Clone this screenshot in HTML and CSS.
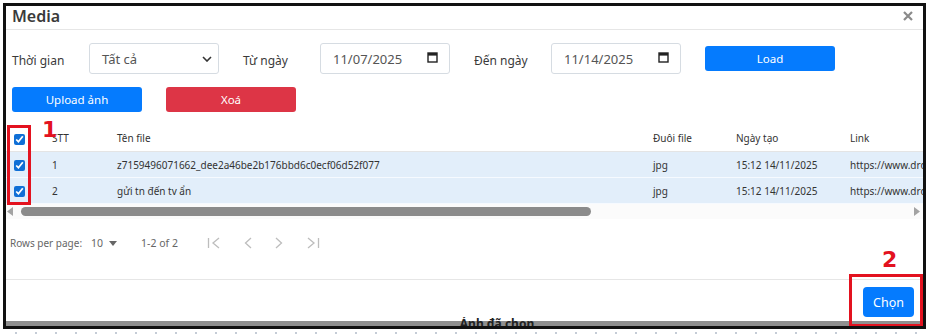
FILE: index.html
```html
<!DOCTYPE html>
<html lang="vi">
<head>
    <meta charset="UTF-8">
    <meta name="viewport" content="width=device-width, initial-scale=1.0">
    <title>Media</title>
    <link rel="stylesheet" href="styles.css">
</head>
<body>
    <div class="frame">
        <div class="modal-header">
            <h3>Media</h3>
            <button class="close-btn" aria-label="close">
                <svg width="10" height="10" viewBox="0 0 10 10"><path d="M1 1L9 9M9 1L1 9" stroke="#8a8a8a" stroke-width="2.2"/></svg>
            </button>
        </div>

        <div class="filter-row">
            <label class="field-label">Thời gian</label>
            <div class="control select-box">
                <span>Tất cả</span>
                <svg width="10" height="6" viewBox="0 0 10 6"><path d="M1 1L5 5L9 1" fill="none" stroke="#333" stroke-width="1.6"/></svg>
            </div>
            <label class="field-label gap">Từ ngày</label>
            <div class="control date-box">
                <span>11/07/2025</span>
                <svg width="11" height="11" viewBox="0 0 11 11"><rect x="1" y="1" width="9" height="9" fill="none" stroke="#222" stroke-width="1.4"/><rect x="1" y="1" width="9" height="2.6" fill="#222"/></svg>
            </div>
            <label class="field-label gap">Đến ngày</label>
            <div class="control date-box">
                <span>11/14/2025</span>
                <svg width="11" height="11" viewBox="0 0 11 11"><rect x="1" y="1" width="9" height="9" fill="none" stroke="#222" stroke-width="1.4"/><rect x="1" y="1" width="9" height="2.6" fill="#222"/></svg>
            </div>
            <button class="btn btn-blue btn-load">Load</button>
        </div>

        <div class="action-row">
            <button class="btn btn-blue">Upload ảnh</button>
            <button class="btn btn-red">Xoá</button>
        </div>

        <div class="table-wrap">
            <table class="media-table">
                <colgroup>
                    <col style="width:38px">
                    <col style="width:65px">
                    <col style="width:536px">
                    <col style="width:83px">
                    <col style="width:114px">
                    <col style="width:594px">
                </colgroup>
                <thead>
                    <tr>
                        <th><input type="checkbox" checked></th>
                        <th>STT</th>
                        <th>Tên file</th>
                        <th>Đuôi file</th>
                        <th>Ngày tạo</th>
                        <th>Link</th>
                    </tr>
                </thead>
                <tbody>
                    <tr>
                        <td><input type="checkbox" checked></td>
                        <td>1</td>
                        <td>z7159496071662_dee2a46be2b176bbd6c0ecf06d52f077</td>
                        <td>jpg</td>
                        <td>15:12 14/11/2025</td>
                        <td>https://www.drop.com/media/z7159496071662_dee2a46be2b176bbd6c0ecf06d52f077.jpg</td>
                    </tr>
                    <tr>
                        <td><input type="checkbox" checked></td>
                        <td>2</td>
                        <td>gửi tn đến tv ẩn</td>
                        <td>jpg</td>
                        <td>15:12 14/11/2025</td>
                        <td>https://www.drop.com/media/gui-tn-den-tv-an.jpg</td>
                    </tr>
                </tbody>
            </table>
        </div>
        <div class="hscroll">
            <svg width="6" height="9" viewBox="0 0 6 9"><path d="M6 0L0 4.5L6 9Z" fill="#a3a3a3"/></svg>
            <div class="hscroll-track"><div class="hscroll-thumb"></div></div>
            <svg width="6" height="9" viewBox="0 0 6 9"><path d="M0 0L6 4.5L0 9Z" fill="#a3a3a3"/></svg>
        </div>

        <div class="pagination">
            <span>Rows per page:</span>
            <span class="rows-select">10 <svg width="8" height="5" viewBox="0 0 8 5"><path d="M0 0H8L4 5Z" fill="#666"/></svg></span>
            <span class="range">1-2 of 2</span>
            <div class="pager">
                <svg width="14" height="12" viewBox="0 0 14 12"><path d="M1.5 1V11M12 1L6 6L12 11" fill="none" stroke="#bdbdbd" stroke-width="1.3"/></svg>
                <svg width="8" height="12" viewBox="0 0 8 12"><path d="M7 1L1.5 6L7 11" fill="none" stroke="#bdbdbd" stroke-width="1.3"/></svg>
                <svg width="8" height="12" viewBox="0 0 8 12"><path d="M1 1L6.5 6L1 11" fill="none" stroke="#bdbdbd" stroke-width="1.3"/></svg>
                <svg width="14" height="12" viewBox="0 0 14 12"><path d="M2 1L8 6L2 11M12.5 1V11" fill="none" stroke="#bdbdbd" stroke-width="1.3"/></svg>
            </div>
        </div>

        <div class="modal-footer">
            <button class="btn btn-blue btn-choose">Chọn</button>
        </div>
        <div class="behind-strip"><span>Ảnh đã chọn</span></div>

        <!-- annotations -->
        <div class="mark mark-1"></div>
        <span class="mark-num num-1">1</span>
        <div class="mark mark-2"></div>
        <span class="mark-num num-2">2</span>
    </div>
    <div class="dots"></div>
</body>
</html>
```

FILE: styles.css
```css
body {
    margin: 0;
    background: #ffffff;
    font-family: 'Noto Sans', 'Open Sans', sans-serif;
    color: #333;
}

.frame {
    position: relative;
    width: 917px;
    height: 320px;
    margin: 3px 0 0 3px;
    border: 3px solid #111;
    overflow: hidden;
    background: #fff;
    display: flex;
    flex-direction: column;
}

/* header */
.modal-header {
    height: 23px;
    border-bottom: 1px solid #e6e6e6;
    display: flex;
    align-items: center;
    justify-content: space-between;
    padding: 0 10px 0 6px;
    flex-shrink: 0;
}

.modal-header h3 {
    margin: -3px 0 0 0;
    font-size: 16px;
    font-weight: 600;
    color: #3a3a3a;
    line-height: 20px;
}

.close-btn {
    border: none;
    background: none;
    padding: 0;
    display: flex;
    margin-top: -4px;
}

/* filters */
.filter-row {
    display: flex;
    align-items: center;
    height: 31px;
    margin-top: 13px;
    padding-left: 6px;
    flex-shrink: 0;
}

.field-label {
    width: 77px;
    font-size: 12px;
    color: #3a3a3a;
    padding-top: 3px;
}

.field-label.gap {
    margin-left: 24px;
}

.control {
    width: 130px;
    height: 31px;
    box-sizing: border-box;
    border: 1px solid #d6dce2;
    border-radius: 3px;
    display: flex;
    align-items: center;
    justify-content: space-between;
    padding: 0 9px 0 12px;
    font-size: 13px;
    color: #555;
}

.select-box {
    padding-right: 6px;
}

.date-box svg {
    margin-right: 2px;
    margin-top: -2px;
}

.btn {
    border: none;
    border-radius: 3px;
    width: 130px;
    height: 25px;
    color: #fff;
    font-family: inherit;
    font-size: 11.5px;
    padding: 0;
}

.btn-blue {
    background-color: #057bfe;
}

.btn-red {
    background-color: #dd3546;
}

.btn-load {
    margin-left: 24px;
}

.action-row {
    display: flex;
    gap: 24px;
    margin-top: 13px;
    padding-left: 6px;
    flex-shrink: 0;
}

/* table */
.table-wrap {
    margin-top: 13px;
    overflow: hidden;
    flex-shrink: 0;
}

.media-table {
    width: 1430px;
    table-layout: fixed;
    border-collapse: collapse;
    font-size: 10px;
    color: #333;
}

.media-table th,
.media-table td {
    text-align: left;
    padding: 0 0 0 8px;
    white-space: nowrap;
    overflow: hidden;
    font-weight: 400;
}

.media-table th {
    height: 26px;
    border-bottom: 1px solid #e4e4e4;
}

.media-table td {
    height: 25px;
    background: #e2eefa;
    border-bottom: 1px solid #f6faff;
}

.media-table input[type="checkbox"] {
    width: 11px;
    height: 11px;
    margin: 0;
    vertical-align: middle;
    accent-color: #0f6fd6;
}

.hscroll {
    height: 15px;
    display: flex;
    align-items: center;
    padding: 0 3px 0 1px;
    gap: 8px;
    background: #fbfbfb;
    flex-shrink: 0;
}

.hscroll-track {
    flex: 1;
    height: 9px;
}

.hscroll-thumb {
    width: 570px;
    height: 9px;
    border-radius: 5px;
    background: #8b8b8b;
}

/* pagination */
.pagination {
    height: 48px;
    display: flex;
    align-items: center;
    padding-left: 4px;
    font-size: 10px;
    color: #666;
    flex-shrink: 0;
}

.rows-select {
    display: flex;
    align-items: center;
    gap: 6px;
    margin-left: 9px;
    font-size: 10.5px;
}

.range {
    margin-left: 24px;
    font-size: 10.5px;
}

.pager {
    display: flex;
    align-items: center;
    margin-left: 29px;
    gap: 23px;
}

/* footer */
.modal-footer {
    margin-top: 12px;
    border-top: 1px solid #e6e6e6;
    padding: 7px 9px 0 0;
    display: flex;
    justify-content: flex-end;
    flex-shrink: 0;
}

.btn-choose {
    width: 51px;
    height: 30px;
    border-radius: 4px;
    font-size: 12.5px;
}

.behind-strip {
    flex: 1;
    background: linear-gradient(#fff 0, #fff 4px, #8f8f8f 4px);
    display: flex;
    justify-content: center;
    overflow: hidden;
}

.behind-strip span {
    font-size: 12px;
    font-weight: 700;
    color: #222;
    line-height: 12px;
    margin-top: 1px;
    margin-left: 65px;
}

/* annotations */
.mark {
    position: absolute;
    border: 3px solid #e3121f;
    box-sizing: border-box;
}

.mark-1 {
    left: 1px;
    top: 119px;
    width: 24px;
    height: 80px;
}

.mark-2 {
    left: 843px;
    top: 268px;
    width: 74px;
    height: 53px;
}

.mark-num {
    position: absolute;
    font-family: 'DejaVu Sans', sans-serif;
    font-weight: 700;
    color: #e3121f;
    font-size: 22px;
    line-height: 22px;
}

.num-1 {
    left: 36px;
    top: 113px;
}

.num-2 {
    left: 876px;
    top: 243px;
}

.dots {
    height: 2px;
    margin-top: 3px;
    background: repeating-linear-gradient(90deg, transparent 0, transparent 15px, #c5ccd6 15px, #c5ccd6 17px, transparent 17px, transparent 20px);
}
```
